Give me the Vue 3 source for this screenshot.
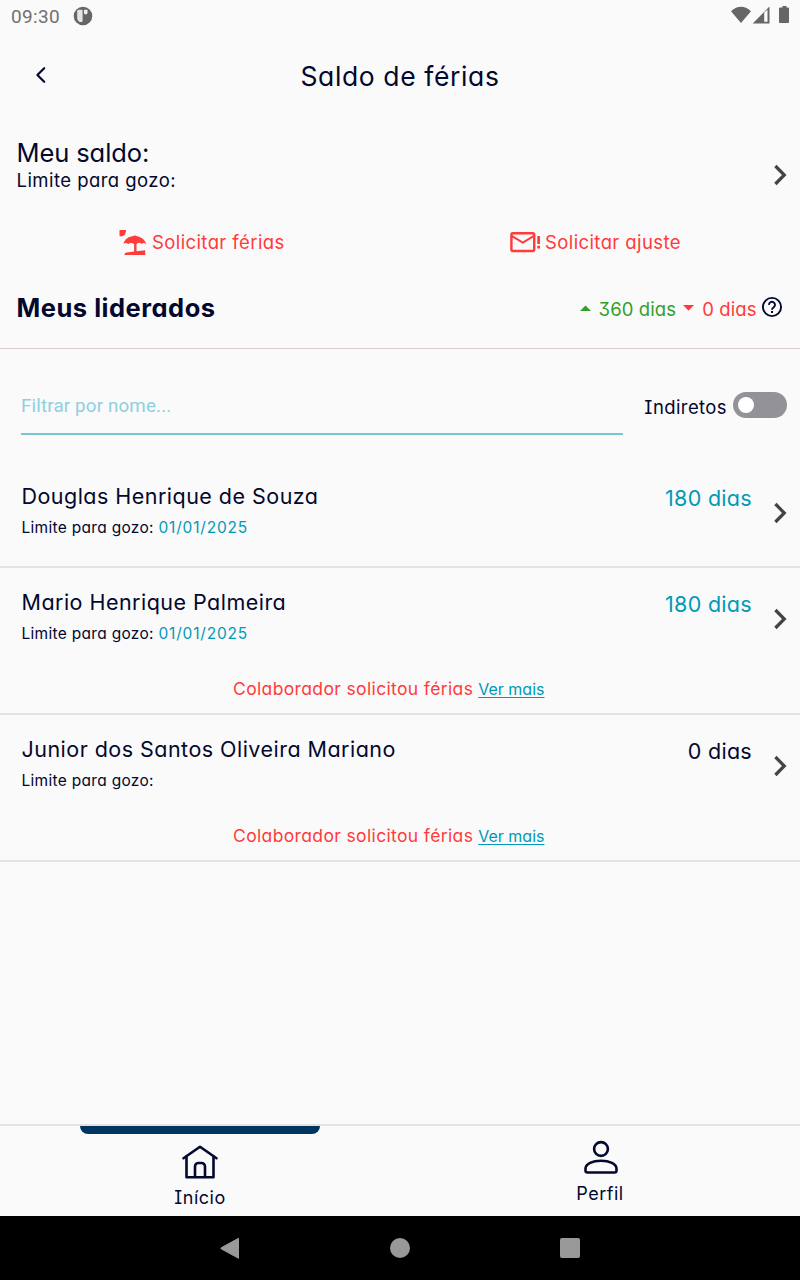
<template>
  <div class="screen">
    <header class="status-bar">
      <span class="clock">09:30</span>
      <svg class="status-app" width="20" height="20" viewBox="0 0 20 20">
        <circle cx="10" cy="10" r="9.3" fill="#666" />
        <path d="M5.600 3.800h3.200q.8 0 .8.800v10.600q0 .8-.8.800H6.500Q4.200 14 4.200 12.500V5.200q0-1.400 1.400-1.400z" fill="#e4e4e4" />
        <path d="M11 3.800h3.500v3a1.750 1.750 0 0 1-3.500 0z" fill="#f0f0f0" />
      </svg>
      <svg class="status-icons" width="60" height="20" viewBox="0 0 60 20" fill="#666">
        <path d="M1 6.2Q11 -2.6 21 6.2L11 18z" />
        <path fill-rule="evenodd" d="M22.700 18.500L39.500 1.500v17zM34.200 7.600v9.200h3.300V4.800z" />
        <path d="M52.500 1h4v1.500H58a1 1 0 0 1 1 1V17a1 1 0 0 1-1 1h-8a1 1 0 0 1-1-1V3.500a1 1 0 0 1 1-1h2.500z" />
      </svg>
    </header>

    <nav class="title-bar">
      <button class="back-button" aria-label="Voltar">
        <svg width="12" height="18" viewBox="0 0 12 18">
          <path d="M9.200 2.200L2.400 9l6.800 6.800" fill="none" stroke="#03082e" stroke-width="2.200" stroke-linecap="round" stroke-linejoin="round" />
        </svg>
      </button>
      <h1>Saldo de férias</h1>
    </nav>

    <section class="balance">
      <div class="balance-text">
        <h2>Meu saldo:</h2>
        <p>Limite para gozo:</p>
      </div>
      <svg class="chevron" width="14" height="22" viewBox="0 0 14 22">
        <path d="M1.400 2l8.900 9-8.900 9" fill="none" stroke="#434446" stroke-width="3.200" />
      </svg>
    </section>

    <section class="actions">
      <button class="action vacation">
        <svg width="28" height="28" viewBox="0 0 28 28" fill="#ff3b3b">
          <path d="M.5 2H7q.2 5.500-5 6.500L.5 8z" />
          <path d="M4.500 16C5.500 11 10 8.300 14.800 8l1-1 1 1c5.200.5 9.500 3.800 10.500 8.400-1.500-1.900-3-1.900-4.500-.5-1.500-1.500-3.600-1.500-5.300 0v7.300l8.700-1V27H5.300l1-2.300 8.800-1.200V16c-1.600-1.500-4.300-1.500-5.800 0-1.400-1.500-3.700-1.300-4.800 0z" />
        </svg>
        <span>Solicitar férias</span>
      </button>
      <button class="action adjust">
        <svg width="31" height="22" viewBox="0 0 31 22">
          <rect x="1.400" y="2.200" width="22.800" height="17.800" rx="1.500" fill="none" stroke="#ff3b3b" stroke-width="2.400" />
          <path d="M1.600 4.800L12.800 11.600 24 4.800" fill="none" stroke="#ff3b3b" stroke-width="2" />
          <path d="M27.300 5h2.700v8h-2.700zM27.300 14.700h2.700v2.800h-2.700z" fill="#ff3b3b" />
        </svg>
        <span>Solicitar ajuste</span>
      </button>
    </section>

    <section class="team-header">
      <h2>Meus liderados</h2>
      <div class="totals">
        <svg class="arrow-up" width="11" height="6" viewBox="0 0 11 6"><path d="M0 6L5.500 .4 11 6z" fill="#33a02c" /></svg>
        <span class="total positive">360 dias</span>
        <svg class="arrow-down" width="11" height="6" viewBox="0 0 11 6"><path d="M0 0h11L5.500 5.800z" fill="#ff3b3b" /></svg>
        <span class="total negative">0 dias</span>
        <svg class="help" width="22" height="22" viewBox="0 0 22 22" fill="none" stroke="#03082e">
          <circle cx="11" cy="11" r="9.100" stroke-width="1.900" />
          <path d="M8 8.900a3 3 0 1 1 4.900 2.200c-1.100.9-1.900 1.300-1.900 2.700" stroke-width="1.900" />
          <path d="M10 15h2v2h-2z" fill="#03082e" stroke="none" />
        </svg>
      </div>
    </section>

    <section class="filter">
      <input v-model="filter" type="text" placeholder="Filtrar por nome..." />
      <label class="indirect">
        <span>Indiretos</span>
        <button class="toggle" :class="{ on: indirect }" @click="indirect = !indirect">
          <span class="knob"></span>
        </button>
      </label>
    </section>

    <main class="people">
      <article v-for="person in visible" :key="person.name" class="person" :class="{ requested: person.requested }">
        <div class="person-row">
          <div class="person-info">
            <h3>{{ person.name }}</h3>
            <p>Limite para gozo: <span class="date">{{ person.limit }}</span></p>
          </div>
          <span class="days" :class="{ available: person.days > 0 }">{{ person.days }} dias</span>
          <svg class="chevron" width="14" height="22" viewBox="0 0 14 22">
            <path d="M1.400 2l8.900 9-8.900 9" fill="none" stroke="#434446" stroke-width="3.200" />
          </svg>
        </div>
        <div v-if="person.requested" class="notice">
          <span>Colaborador solicitou férias</span>
          <a href="#">Ver mais</a>
        </div>
      </article>
    </main>

    <footer class="tabs">
      <button class="tab active">
        <svg width="38" height="36" viewBox="0 0 38 36" fill="none" stroke="#03082e" stroke-width="2.600" stroke-linejoin="round" stroke-linecap="round">
          <path d="M2.500 14.200L19 2.800l16.500 11.400" />
          <path d="M5.500 12.500v20.700h27V12.500" />
          <path d="M14 33V22.500a3.500 3.500 0 0 1 3.500-3.500h3a3.500 3.500 0 0 1 3.500 3.500V33" />
        </svg>
        <span>Início</span>
      </button>
      <button class="tab profile">
        <svg width="36" height="36" viewBox="0 0 36 36" fill="none" stroke="#03082e" stroke-width="2.600" stroke-linejoin="round">
          <circle cx="18" cy="10" r="6.900" />
          <path d="M4.500 33.500h27a2 2 0 0 0 2-2v-1.700C33.500 25 26.500 21.700 18 21.700S2.500 25 2.500 29.800v1.700a2 2 0 0 0 2 2z" />
        </svg>
        <span>Perfil</span>
      </button>
    </footer>

    <div class="system-nav">
      <svg width="20" height="24" viewBox="0 0 20 24"><path d="M18.500 2.300v20L1.300 12.900a.7.7 0 0 1 0-1.200z" fill="#999" stroke="#999" stroke-width="1" stroke-linejoin="round" /></svg>
      <span class="nav-home"></span>
      <span class="nav-recent"></span>
    </div>
  </div>
</template>

<script setup>
import { ref, computed } from 'vue'

const filter = ref('')
const indirect = ref(false)

const people = [
  { name: 'Douglas Henrique de Souza', limit: '01/01/2025', days: 180, requested: false },
  { name: 'Mario Henrique Palmeira', limit: '01/01/2025', days: 180, requested: true },
  { name: 'Junior dos Santos Oliveira Mariano', limit: '', days: 0, requested: true }
]

const visible = computed(() =>
  people.filter((p) => p.name.toLowerCase().includes(filter.value.toLowerCase()))
)
</script>

<style>
body {
  margin: 0;
  background: #fafafa;
}
</style>

<style scoped>
.screen {
  width: 800px;
  height: 1280px;
  display: flex;
  flex-direction: column;
  overflow: hidden;
  background: #fafafa;
  color: #03082e;
  font-family: Inter, "Noto Sans", sans-serif;
  /* single-storey a, serifed capital I, flat-top 3 */
  font-feature-settings: "cv11", "cv08", "cv09";
}

h1,
h2,
h3,
p {
  margin: 0;
  font-weight: 400;
}

button {
  padding: 0;
  border: none;
  background: none;
  color: inherit;
  font: inherit;
  font-feature-settings: inherit;
  letter-spacing: inherit;
}

svg {
  display: block;
  flex: none;
}

.status-bar {
  display: flex;
  align-items: center;
  height: 32px;
  padding: 0 10px 0 11px;
  box-sizing: border-box;
}

.clock {
  width: 62px;
  font: 400 19px Roboto, sans-serif;
  letter-spacing: 0.35px;
  color: #707070;
}

.status-icons {
  margin-left: auto;
  margin-top: -2px;
}

.title-bar {
  display: grid;
  grid-template-columns: 60px 1fr 60px;
  align-items: center;
  height: 88px;
}

.back-button {
  padding: 0 0 3px 35px;
}

.title-bar h1 {
  text-align: center;
  font-size: 26.500px;
  letter-spacing: 0.62px;
}

.balance {
  display: flex;
  justify-content: space-between;
  align-items: center;
  height: 90px;
  padding: 0 12px 0 16.500px;
}

.balance .chevron {
  margin-top: 20px;
}

.balance-text h2 {
  font-size: 25.500px;
  line-height: 30px;
  letter-spacing: -0.1px;
}

.balance-text p {
  font-size: 18.500px;
  line-height: 24px;
  letter-spacing: 0.45px;
}

.actions {
  display: grid;
  grid-template-columns: 1fr 1fr;
  height: 64px;
  color: #ff3b3b;
  font-size: 18.500px;
  letter-spacing: 0.4px;
}

.action {
  display: flex;
  align-items: center;
  justify-content: flex-start;
  gap: 5px;
}

.vacation {
  padding-left: 119px;
}

.adjust {
  gap: 4px;
  padding-left: 110px;
}

.team-header {
  display: flex;
  align-items: center;
  justify-content: space-between;
  height: 74px;
  padding: 0 17px 0 16.500px;
  border-bottom: 1px solid #d8cccf;
}

.team-header h2 {
  padding-bottom: 8px;
  font-size: 25.500px;
  font-weight: 700;
  letter-spacing: 0.5px;
}

.totals {
  display: flex;
  align-items: center;
  height: 24px;
  padding-bottom: 4px;
  font-size: 18.500px;
  letter-spacing: 0.1px;
}

.total {
  margin-left: 8px;
}

.positive {
  color: #33a02c;
}

.negative {
  color: #ff3b3b;
}

.arrow-up {
  margin-bottom: 2px;
}

.arrow-down {
  margin: 0 0 2px 7px;
}

.help {
  margin: -5px 0 0 4.500px;
}

.filter {
  display: flex;
  align-items: flex-start;
  justify-content: space-between;
  height: 113px;
  padding: 28px 13px 0 21px;
  box-sizing: border-box;
}

.filter input {
  width: 602px;
  height: 58px;
  box-sizing: border-box;
  padding: 2px 0 0;
  border: none;
  border-bottom: 2px solid #7ac5d4;
  outline: none;
  background: transparent;
  font: 400 18.800px Roboto, sans-serif;
  letter-spacing: 0.15px;
}

.filter input::placeholder {
  color: #8fd0de;
  opacity: 1;
}

.indirect {
  display: flex;
  align-items: center;
  gap: 6px;
  height: 60px;
  font-size: 18.500px;
  letter-spacing: 0.4px;
}

.toggle {
  display: flex;
  align-items: center;
  width: 54px;
  height: 26px;
  margin-bottom: 4px;
  padding: 0 5px;
  box-sizing: border-box;
  border-radius: 13px;
  background: #929298;
}

.toggle.on {
  justify-content: flex-end;
  background: #0099b8;
}

.knob {
  width: 16px;
  height: 16px;
  border-radius: 50%;
  background: #fff;
}

.people {
  flex: 1;
}

.person {
  height: 106px;
  box-sizing: border-box;
  border-bottom: 2px solid #e6e1e3;
}

.person.requested {
  height: 147px;
}

.person-row {
  display: flex;
  height: 102px;
  padding: 0 12px 0 21.500px;
}

.person-info {
  flex: 1;
  padding-top: 19px;
}

.person-info h3 {
  font-size: 21.500px;
  line-height: 30px;
  letter-spacing: 0.47px;
}

.person-info p {
  padding-top: 1px;
  font-size: 15.500px;
  line-height: 32px;
  letter-spacing: 0.3px;
}

.date {
  letter-spacing: 0.8px;
}

.date,
.notice a {
  color: #0099b8;
}

.days {
  margin-right: 22px;
  padding-top: 21px;
  font-size: 21.500px;
  line-height: 30px;
  letter-spacing: 0.3px;
}

.days.available {
  color: #0099b8;
}

.person .chevron {
  align-self: center;
}

.notice {
  display: flex;
  align-items: center;
  gap: 5px;
  height: 36px;
  padding-left: 233px;
  color: #ff3b3b;
  font-size: 17.500px;
  letter-spacing: 0.36px;
}

.notice a {
  padding-top: 1px;
  font-size: 16px;
  letter-spacing: 0;
  text-underline-offset: 2px;
}

.tabs {
  display: grid;
  grid-template-columns: 1fr 1fr;
  height: 92px;
  box-sizing: border-box;
  border-top: 2px solid #e6e1e3;
}

.tab {
  display: flex;
  flex-direction: column;
  align-items: center;
  font-size: 18px;
  line-height: 24px;
  letter-spacing: 0.5px;
}

.tab.active::before {
  content: "";
  width: 240px;
  height: 8px;
  margin-bottom: 10px;
  border-radius: 0 0 8px 8px;
  background: #003560;
}

.tab.active span {
  padding-top: 6px;
}

.profile {
  padding-top: 13px;
}

.profile svg {
  margin-left: 2px;
}

.profile span {
  padding-top: 7px;
}

.system-nav {
  display: grid;
  grid-template-columns: 20px 20px 20px;
  column-gap: 150px;
  justify-content: center;
  align-items: center;
  height: 64px;
  background: #000;
}

.nav-home {
  width: 20px;
  height: 20px;
  margin: -1px 0 0 -0.500px;
  border-radius: 50%;
  background: #999;
}

.nav-recent {
  width: 20px;
  height: 20px;
  border-radius: 2px;
  background: #999;
}
</style>
